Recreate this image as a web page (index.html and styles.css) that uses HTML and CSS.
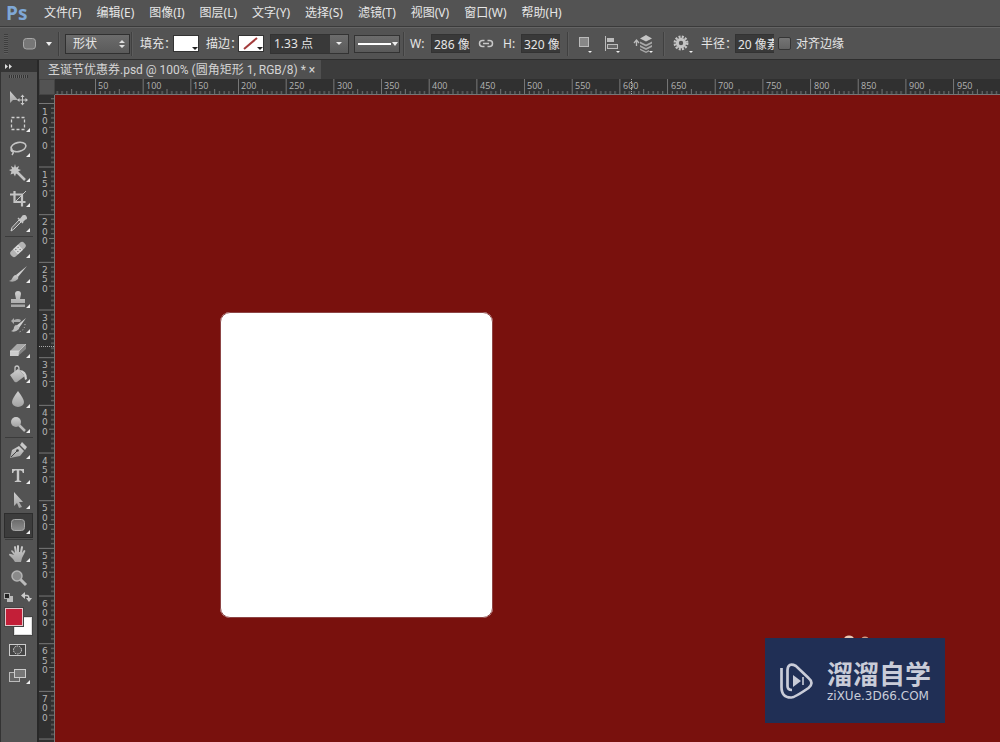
FILE: index.html
```html
<!DOCTYPE html>
<html lang="zh-CN">
<head>
<meta charset="utf-8">
<title>Ps</title>
<link rel="stylesheet" href="styles.css">
</head>
<body>
<svg class="defs" width="0" height="0" aria-hidden="true">
  <defs>
    <linearGradient id="metal" x1="0" y1="0" x2="0" y2="1"><stop offset="0" stop-color="#d0d0d0"/><stop offset="1" stop-color="#a2a2a2"/></linearGradient>
    <linearGradient id="plate" x1="0" y1="0" x2="0" y2="1"><stop offset="0" stop-color="#6a6a6a"/><stop offset="1" stop-color="#8c8c8c"/></linearGradient>
  </defs>
</svg>
<header class="menubar">
  <span class="brand">Ps</span>
  <nav class="menus">
    <button>文件(F)</button><button>编辑(E)</button><button>图像(I)</button><button>图层(L)</button><button>文字(Y)</button><button>选择(S)</button><button>滤镜(T)</button><button>视图(V)</button><button>窗口(W)</button><button>帮助(H)</button>
  </nav>
</header>

<section class="options">
  <span class="grip"></span>
  <button class="preset" aria-label="圆角矩形工具"><svg width="32" height="16"><rect x="1.500" y="2.500" width="12" height="10.500" rx="3" fill="#777" stroke="#a8a8a8"/><path d="M24 6h6l-3 4z" fill="#eee"/></svg></button>
  <span class="rule"></span>
  <span class="picker"><select aria-label="模式"><option>形状</option></select><svg width="8" height="10"><path d="M1 4l3-3 3 3zM1 6h6l-3 3z" fill="#e0e0e0"/></svg></span>
  <span class="rule"></span>
  <span class="label">填充：</span>
  <button class="swatch" aria-label="填充"><svg width="24" height="15"><path d="M18 11h6l-3 3z" fill="#222"/></svg></button>
  <span class="label">描边：</span>
  <button class="swatch" aria-label="描边"><svg width="24" height="15"><path d="M5 13L18 2" stroke="#a33b3b" stroke-width="2"/><path d="M18 11h6l-3 3z" fill="#222"/></svg></button>
  <span class="combo"><input aria-label="描边宽度" value="1.33 点"><button aria-label="宽度选项"><svg width="8" height="5"><path d="M1 1h6L4 4z" fill="#eee"/></svg></button></span>
  <button class="line" aria-label="描边类型"><svg width="44" height="16"><path d="M3 8h33" stroke="#fff" stroke-width="2"/><path d="M37 6h6l-3 4z" fill="#eee"/></svg></button>
  <span class="rule"></span>
  <label class="label" for="w">W:</label><input class="field" id="w" value="286 像素">
  <button class="icon link" aria-label="链接"><svg width="16" height="12" fill="none" stroke="#c8c8c8" stroke-width="1.500"><path d="M6.500 2.500H4.500a3 3 0 0 0 0 6H6.500M9.500 2.500h2a3 3 0 0 1 0 6h-2M5 5.500h6"/></svg></button>
  <label class="label" for="h">H:</label><input class="field" id="h" value="320 像素">
  <span class="rule"></span>
  <button class="icon" aria-label="路径操作"><svg width="18" height="20"><rect x="4.500" y="3.500" width="9" height="9" fill="#888" stroke="#bbb"/><path d="M13 17h4l-2 2z" fill="#eee"/></svg></button>
  <button class="icon" aria-label="对齐"><svg width="22" height="20"><path d="M4.500 2v15" stroke="#bbb"/><rect x="6" y="4" width="7" height="4" fill="#bbb"/><rect x="6.500" y="10.500" width="10" height="4" fill="#666" stroke="#bbb"/><path d="M15 17h4l-2 2z" fill="#eee"/></svg></button>
  <button class="icon" aria-label="排列"><svg width="26" height="20"><path d="M7.500 12V7M5 9l2.500-3L10 9" fill="none" stroke="#bbb" stroke-width="1.300"/><path d="M17 1l6 3.500-6 3-6-3z" fill="#c4c4c4"/><path d="M11 7.500l6 3 6-3v2l-6 3-6-3zM11 11l6 3 6-3v2l-6 3-6-3zM11 14.500l6 3 3-1.500v1.500L17 19l-6-3z" fill="#a8a8a8"/><path d="M20 17h4l-2 2z" fill="#eee"/></svg></button>
  <span class="rule"></span>
  <button class="icon" aria-label="设置"><svg width="22" height="20"><circle cx="10" cy="9" r="6.200" fill="none" stroke="#c4c4c4" stroke-width="2.500" stroke-dasharray="2 1.250"/><circle cx="10" cy="9" r="3.700" fill="none" stroke="#c4c4c4" stroke-width="3"/><path d="M18 17h4l-2 2z" fill="#eee"/></svg></button>
  <label class="label" for="r">半径：</label><input class="field" id="r" value="20 像素">
  <input class="check" type="checkbox" id="edge"><label class="label" for="edge">对齐边缘</label>
</section>

<main class="workspace">
  <aside class="tools">
    <button class="collapse" aria-label="展开"><svg width="10" height="7"><path d="M1 1l3 2.500L1 6zM5 1l3 2.500L5 6z" fill="#ddd"/></svg></button>
    <span class="tgrip"></span>
    <div class="group">
      <button aria-label="移动"><svg viewBox="0 0 28 25"><path d="M6 5v12l3-3h5z" fill="url(#metal)"/><path d="M18.500 10v8M14.500 14h8" stroke="#c8c8c8"/><path d="M18.500 8.500l-2 2.500h4zM18.500 19.500l-2-2.500h4zM13 14l2.500-2v4zM24 14l-2.500-2v4z" fill="#c8c8c8"/></svg></button>
      <button class="more" aria-label="矩形选框"><svg viewBox="0 0 28 25"><rect x="7.500" y="6.500" width="13" height="12" fill="none" stroke="#d0d0d0" stroke-width="1.300" stroke-dasharray="3 2"/></svg></button>
      <button class="more" aria-label="套索"><svg viewBox="0 0 28 25" fill="none" stroke="#c4c4c4" stroke-width="1.600"><ellipse cx="14.500" cy="11" rx="7.500" ry="4.500" transform="rotate(-12 14.500 11)"/><path d="M8.500 13c-2 0-2 3 1 2.500M9 15c1 2 0 3-1 4"/></svg></button>
      <button class="more" aria-label="魔棒"><svg viewBox="0 0 28 25"><path d="M11 3l1 3.500L15 5l-1 3 3 1-3 1.500 1 3-3-1-1 3-1.500-3-3 1 1-3L5 9l3-1-1-3 3 1.500z" fill="#c4c4c4"/><path d="M13 11l8 8" stroke="#c4c4c4" stroke-width="2.500"/></svg></button>
      <button class="more" aria-label="裁剪"><svg viewBox="0 0 28 25" fill="none" stroke="#c4c4c4"><path d="M10.500 5v11h11M6 8.500h12v12" stroke-width="2.200"/><path d="M10 17L22 5"/></svg></button>
      <button class="more" aria-label="吸管"><svg viewBox="0 0 28 25"><path d="M15 9l2 2-7.500 7.500L7 20l1-3.500z" fill="#666" stroke="#d0d0d0"/><path d="M14 7l5 5M16 9l3-4q2-1 3 1t-1 2l-3 3z" fill="#c4c4c4" stroke="#c4c4c4" stroke-width="1.500"/></svg></button>
    </div>
    <hr>
    <div class="group">
      <button class="more" aria-label="修复画笔"><svg viewBox="0 0 28 25"><g transform="rotate(-43 14 12.500)"><rect x="5" y="9" width="18" height="7" rx="3" fill="#b4b4b4"/><rect x="10.500" y="9" width="7" height="7" fill="#d8d8d8"/><path d="M12 11h1M15 11h1M12 14h1M15 14h1" stroke="#555"/></g></svg></button>
      <button class="more" aria-label="画笔"><svg viewBox="0 0 28 25"><path d="M23 4l-9 11-2-2z" fill="#d0d0d0"/><path d="M12 13q3 1 2 4-4 4-9 2 3-1 4-4 1-2 3-2" fill="url(#metal)"/></svg></button>
      <button class="more" aria-label="图章"><svg viewBox="0 0 28 25"><path d="M12 12l-1-5a3 3 0 1 1 6 0l-1 5h5v4H7v-4zM7 17h14v3H7z" fill="url(#metal)"/><path d="M7 17h14" stroke="#555"/></svg></button>
      <button class="more" aria-label="历史画笔"><svg viewBox="0 0 28 25"><path d="M22 6l-7 10-3-2z" fill="#d0d0d0"/><path d="M12 13q4 1 3 4-4 4-8 2 3-1 3-4 1-2 2-2" fill="#bbb"/><path d="M7 9l3-3v2q4-2 7 0l-1 2h-6v2z" fill="#aaa"/><path d="M21 12q0 6-6 8" fill="none" stroke="#ccc" stroke-dasharray="1 2"/></svg></button>
      <button class="more" aria-label="橡皮擦"><svg viewBox="0 0 28 25"><path d="M6 14l7-7h9l-7 7z" fill="#a8a8a8"/><path d="M6 14h9l-1 5H6z" fill="#ccc"/><path d="M15 14l7-7v5l-8 7z" fill="#858585"/><path d="M6 14h9l7-7M15 14l-1 5" fill="none" stroke="#ddd" stroke-width=".700"/></svg></button>
      <button class="more" aria-label="油漆桶"><svg viewBox="0 0 28 25"><path d="M6 13l8-6 7 7-8 6q-2 1-3-1z" fill="url(#metal)"/><path d="M11 11V6q0-2 2-2t2 3v4" fill="none" stroke="#c4c4c4" stroke-width="1.300"/><path d="M15 8q8 0 8 9l-2 1-1-5z" fill="#d0d0d0"/></svg></button>
      <button class="more" aria-label="模糊"><svg viewBox="0 0 28 25"><path d="M14 4q6 8 6 11a6 5 0 0 1-12 0q0-3 6-11" fill="url(#metal)"/></svg></button>
      <button class="more" aria-label="减淡"><svg viewBox="0 0 28 25"><path d="M15 13l6 6" stroke="#bbb" stroke-width="2.500"/><circle cx="12" cy="10" r="5" fill="url(#metal)"/></svg></button>
    </div>
    <hr>
    <div class="group">
      <button class="more" aria-label="钢笔"><svg viewBox="0 0 28 25"><path d="M6 20l2-8 7-4 5 5-4 5z" fill="url(#metal)"/><path d="M16 7l2-3 5 5-2 3z" fill="#c8c8c8"/><path d="M7 19l6-6" stroke="#444"/><circle cx="13.500" cy="12.500" r="1.300" fill="#444"/></svg></button>
      <button class="more" aria-label="文字"><svg viewBox="0 0 28 25"><path d="M8 6h12v4h-1.200q-.300-2.500-2-2.500h-1.600V17q0 1 2 1v1h-6.400v-1q2 0 2-1V7.500h-1.600q-1.700 0-2 2.500H8z" fill="#c8c8c8"/></svg></button>
      <button class="more" aria-label="路径选择"><svg viewBox="0 0 28 25"><path d="M10 4l9 10h-4l3 5-3 1-2-5-3 3z" fill="url(#metal)"/></svg></button>
      <button class="more active" aria-label="圆角矩形"><svg viewBox="0 0 28 25"><rect x="7.500" y="6.500" width="13" height="11" rx="3" fill="url(#plate)" stroke="#a8a8a8"/></svg></button>
    </div>
    <hr class="spaced">
    <div class="group">
      <button class="more" aria-label="抓手"><svg viewBox="0 0 28 25"><path d="M10 14L7 10q1-2 3 1l1 1-1-6q1-2 2 0l1 5V5q1-2 2 0v6h1l1-5q1-2 2 0l-1 6 2-3q2 0 1 2l-3 6-1 4h-6l-2-3-4-4q0-2 2-1z" fill="url(#metal)"/></svg></button>
      <button aria-label="缩放"><svg viewBox="0 0 28 25"><path d="M16 13l6 6" stroke="#bbb" stroke-width="3"/><circle cx="13" cy="10" r="5" fill="#8a8a8a" stroke="#b4b4b4" stroke-width="1.500"/></svg></button>
    </div>
    <div class="colors">
      <svg width="28" height="11"><rect x="3" y="4" width="6" height="6" fill="#bbb"/><rect x=".500" y="1.500" width="5" height="5" fill="#222" stroke="#aaa"/><path d="M20 3.500h3q2 0 2 4" fill="none" stroke="#ccc" stroke-width="1.500"/><path d="M21 0v7l-4-3.500zM22 6h6l-3 4z" fill="#ccc"/></svg>
      <div class="chips"><button class="back" aria-label="背景色"></button><button class="front" aria-label="前景色"></button></div>
    </div>
    <div class="group modes">
      <button aria-label="快速蒙版"><svg viewBox="0 0 28 25"><rect x="5.500" y="6.500" width="16" height="11" fill="#444" stroke="#ccc"/><circle cx="13.500" cy="12" r="4" fill="#555" stroke="#ddd" stroke-dasharray="1.500 1"/></svg></button>
      <button class="more" aria-label="屏幕模式"><svg viewBox="0 0 28 25"><rect x="5.500" y="9.500" width="10" height="9" fill="#666" stroke="#bbb"/><rect x="10.500" y="6.500" width="11" height="8" fill="#777" stroke="#ccc"/></svg></button>
    </div>
  </aside>

  <section class="document">
    <div class="tabs"><div class="tab"><span>圣诞节优惠券.psd @ 100% (圆角矩形 1, RGB/8) *</span><button aria-label="关闭">×</button></div></div>
    <div class="view">
      <span class="corner"></span>
      <svg class="hruler" height="16" width="100%">
        <defs><pattern id="ht" x="40" width="47.670" height="16" patternUnits="userSpaceOnUse">
          <path d="M.500 0v16" stroke="#777"/>
          <path d="M5.270 12v4M10.030 12v4M14.800 12v4M19.570 12v4M24.330 10v6M29.100 12v4M33.870 12v4M38.640 12v4M43.400 12v4" stroke="#767676"/>
        </pattern></defs>
        <rect width="100%" height="16" fill="url(#ht)"/>
        <g class="num"><text x="43" y="10">50</text><text x="91" y="10">100</text><text x="138" y="10">150</text><text x="186" y="10">200</text><text x="234" y="10">250</text><text x="282" y="10">300</text><text x="329" y="10">350</text><text x="377" y="10">400</text><text x="425" y="10">450</text><text x="472" y="10">500</text><text x="520" y="10">550</text><text x="568" y="10">600</text><text x="616" y="10">650</text><text x="663" y="10">700</text><text x="711" y="10">750</text><text x="759" y="10">800</text><text x="806" y="10">850</text><text x="854" y="10">900</text><text x="902" y="10">950</text></g>
        <path d="M576.500 0v16" stroke="#aaa" stroke-dasharray="1 1"/>
      </svg>
      <svg class="vruler" width="16" height="100%">
        <defs><pattern id="vt" y="71.500" width="16" height="47.670" patternUnits="userSpaceOnUse">
          <path d="M0 .500h16" stroke="#777"/>
          <path d="M12 5.270h4M12 10.030h4M12 14.800h4M12 19.570h4M10 24.330h6M12 29.100h4M12 33.870h4M12 38.640h4M12 43.400h4" stroke="#767676"/>
        </pattern><pattern id="vs" y="8" width="16" height="47.670" patternUnits="userSpaceOnUse">
          <path d="M0 .500h16" stroke="#777"/>
          <path d="M12 5.270h4M12 10.030h4M12 14.800h4M12 19.570h4M10 24.330h6M12 29.100h4M12 33.870h4M12 38.640h4M12 43.400h4" stroke="#767676"/>
        </pattern></defs>
        <rect width="16" height="55" fill="url(#vs)"/>
        <rect y="55" width="16" height="100%" fill="url(#vt)"/>
        <path d="M0 251.500h16" stroke="#aaa" stroke-dasharray="1 1"/>
        <g class="num stacked">
          <text><tspan x="3" y="20">1</tspan><tspan x="3" y="29">0</tspan><tspan x="3" y="39">0</tspan><tspan x="3" y="54">0</tspan></text>
          <text><tspan x="3" y="83">1</tspan><tspan x="3" y="92">5</tspan><tspan x="3" y="102">0</tspan></text>
          <text><tspan x="3" y="130">2</tspan><tspan x="3" y="140">0</tspan><tspan x="3" y="149">0</tspan></text>
          <text><tspan x="3" y="178">2</tspan><tspan x="3" y="187">5</tspan><tspan x="3" y="197">0</tspan></text>
          <text><tspan x="3" y="226">3</tspan><tspan x="3" y="235">0</tspan><tspan x="3" y="245">0</tspan></text>
          <text><tspan x="3" y="273">3</tspan><tspan x="3" y="283">5</tspan><tspan x="3" y="292">0</tspan></text>
          <text><tspan x="3" y="321">4</tspan><tspan x="3" y="330">0</tspan><tspan x="3" y="340">0</tspan></text>
          <text><tspan x="3" y="369">4</tspan><tspan x="3" y="378">5</tspan><tspan x="3" y="388">0</tspan></text>
          <text><tspan x="3" y="416">5</tspan><tspan x="3" y="426">0</tspan><tspan x="3" y="435">0</tspan></text>
          <text><tspan x="3" y="464">5</tspan><tspan x="3" y="474">5</tspan><tspan x="3" y="483">0</tspan></text>
          <text><tspan x="3" y="512">6</tspan><tspan x="3" y="521">0</tspan><tspan x="3" y="531">0</tspan></text>
          <text><tspan x="3" y="559">6</tspan><tspan x="3" y="569">5</tspan><tspan x="3" y="578">0</tspan></text>
          <text><tspan x="3" y="607">7</tspan><tspan x="3" y="616">0</tspan><tspan x="3" y="626">0</tspan></text>
        </g>
      </svg>
      <div class="canvas">
        <div class="shape"></div>
        <svg class="dots" width="26" height="4"><ellipse cx="6" cy="4" rx="5" ry="3.500" fill="#e9c9b4"/><ellipse cx="22" cy="4" rx="3.500" ry="2.500" fill="#d29d86"/></svg>
        <div class="badge">
          <svg width="36" height="38" viewBox="0 0 36 38" fill="none" stroke="#c9ccd8" stroke-width="2.700"><path d="M2.500 6v19q0 11 10 10.500 3 0 17-9.500 6-5 0-10L17 4q-8-4-8.500 4v16q0 4 4.500 4"/><path d="M14 13l8 6-8 6z" fill="#c9ccd8" stroke="none"/><path d="M24 15v8" stroke-width="1.600"/></svg>
          <div class="badge-text"><strong>溜溜自学</strong><span>ziXUe.3D66.COM</span></div>
        </div>
      </div>
    </div>
  </section>
</main>
</body>
</html>
```
FILE: styles.css
```css
* { box-sizing: border-box; }
body {
  margin: 0;
  height: 100vh;
  display: flex;
  flex-direction: column;
  overflow: hidden;
  background: #282828;
  color: #e6e6e6;
  font: 12px/16px "Noto Sans", "Noto Sans CJK SC", sans-serif;
}
button, input, select { font: inherit; color: inherit; margin: 0; padding: 0; border: 0; background: none; border-radius: 0; }
svg { display: block; }
.defs { position: absolute; }

.menubar {
  display: flex;
  align-items: center;
  height: 27px;
  flex: none;
  background: #535353;
  border-bottom: 1px solid #3a3a3a;
}
.brand { width: 44px; padding-left: 6px; font: bold 19px/24px "Open Sans", sans-serif; color: #7fa8d6; }
.menus { display: flex; gap: 15px; white-space: nowrap; }

.options {
  display: grid;
  grid-template-columns: 18px 36px 7px 66px 9px 33px 33px 32px 32px 84px 49px 7px 21px 40px 32px 18px 46px 8px 26px 28px 34px 8px 30px 34px 43px 18px 1fr;
  align-items: center;
  height: 33px;
  flex: none;
  padding-left: 4px;
  background: #535353;
  border-top: 1px solid #646464;
  border-bottom: 1px solid #2e2e2e;
  white-space: nowrap;
}
.options > * { justify-self: start; }
.grip { width: 4px; height: 20px; background: repeating-linear-gradient(#3d3d3d 0 1px, #5d5d5d 1px 2px); }
.rule { width: 2px; height: 24px; background: #404040; border-right: 1px solid #5c5c5c; }
.picker { display: grid; align-items: center; width: 65px; }
.picker > * { grid-area: 1 / 1; }
.picker select { appearance: none; width: 65px; height: 20px; padding-left: 7px; border: 1px solid #303030; background: linear-gradient(#6c6c6c, #5a5a5a); }
.picker svg { justify-self: end; margin-right: 4px; pointer-events: none; }
.swatch { width: 26px; height: 17px; border: 1px solid #333; background: #fff; }
.combo { display: flex; height: 20px; border: 1px solid #333; }
.combo input { width: 59px; padding-left: 3px; background: #393939; }
.combo button { width: 18px; display: grid; place-items: center; background: linear-gradient(#6c6c6c, #5a5a5a); }
.line { width: 46px; height: 18px; border: 1px solid #333; background: linear-gradient(#6c6c6c, #5a5a5a); }
.field { width: 39px; height: 19px; padding-left: 2px; background: #393939; border: 1px solid #333; border-right: 0; }
.link { padding-left: 7px; }
.check { appearance: none; width: 13px; height: 13px; border: 1px solid #353535; border-radius: 2px; background: linear-gradient(#757575, #636363); }

.workspace { display: flex; flex: 1; min-height: 0; }
.tools { width: 37px; flex: none; display: flex; flex-direction: column; background: #535353; border-left: 1px solid #333; margin-right: 2px; }
.collapse { height: 12px; flex: none; padding: 2px 3px; background: #353535; }
.tgrip { width: 19px; height: 3px; margin: 3px 8px 8px; background: repeating-linear-gradient(90deg, #333 0 1px, #666 1px 2px); }
.group { display: grid; padding-left: 3px; }
.group button { position: relative; width: 29px; height: 25px; }
.group svg { width: 28px; height: 25px; }
.more::after { content: ""; position: absolute; right: 3px; bottom: 4px; border: solid transparent; border-width: 2px; border-right-color: #eee; border-bottom-color: #eee; }
.group .active { background: #3c3c3c; outline: 1px solid #2d2d2d; outline-offset: -1px; }
.tools hr { width: 28px; height: 1px; margin: 0 4px; border: 0; background: #3b3b3b; flex: none; }
.tools .spaced { margin: 1px 4px; }
.colors { padding: 1px 4px 0; }
.colors svg { width: 28px; margin-left: -1px; }
.chips { display: grid; height: 30px; padding-top: 5px; }
.chips button { grid-area: 1 / 1; width: 18px; height: 18px; border: 1px solid #ddd; outline: 1px solid #444; }
.chips .back { background: #fff; margin: 9px 0 0 9px; }
.chips .front { background: #c31f38; border-color: #e4c4c8; }
.modes { padding-top: 5px; }

.document { flex: 1; min-width: 0; display: flex; flex-direction: column; }
.tabs { height: 19px; flex: none; display: flex; background: #3c3c3c; }
.tab { display: flex; align-items: center; gap: 3px; padding: 0 6px 0 9px; background: #505050; color: #d4d4d4; white-space: nowrap; font-family: Roboto, "Noto Sans CJK SC", sans-serif; }
.view { flex: 1; min-height: 0; display: grid; grid-template: 16px 1fr / 16px 1fr; background: #303030; }
.corner { background: #535353; border: 1px solid #444; }
.num { font: 9px/10px "Open Sans", sans-serif; fill: #b4b4b4; }
.stacked { font-family: "DejaVu Sans", sans-serif; }
.hruler { border-bottom: 1px solid #777; }
.vruler { border-right: 1px solid #777; }
.canvas { position: relative; overflow: hidden; background: #79110d; }
.shape { position: absolute; left: 165px; top: 217px; width: 273px; height: 306px; border-radius: 10px; background: #fff; outline: 1px solid #8d4545; outline-offset: -1px; }
.dots { position: absolute; right: 131px; bottom: 103px; }
.badge { position: absolute; right: 55px; bottom: 19px; width: 180px; height: 85px; display: flex; align-items: center; gap: 12px; padding-left: 14px; background: #202f55; color: #c9ccd8; }
.badge-text { display: grid; gap: 2px; white-space: nowrap; }
.badge-text strong { font: 700 26px/28px "Noto Sans CJK SC", sans-serif; }
.badge-text span { font: 12px/14px "DejaVu Sans", sans-serif; }
```
